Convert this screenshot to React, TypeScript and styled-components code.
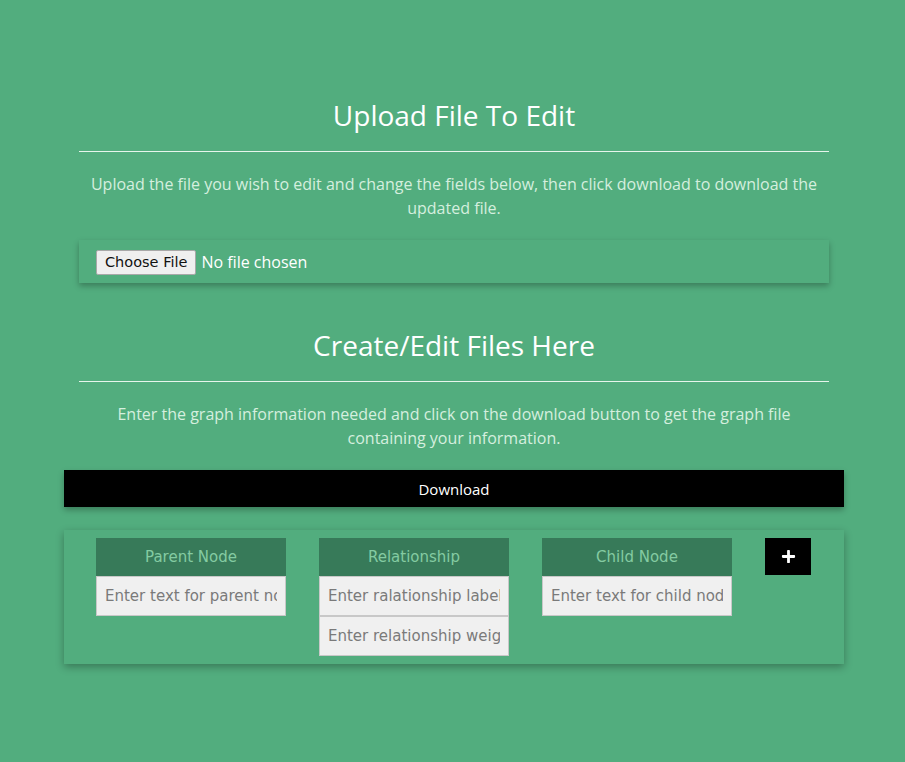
import React from "react";
import styled, { createGlobalStyle } from "styled-components";
import { FaPlus } from "react-icons/fa";

const Global = createGlobalStyle`
  html, body { margin: 0; padding: 0; }
  body {
    background: #52ad7e;
    font-family: "Open Sans", "Noto Sans", sans-serif;
    min-height: 762px;
    padding-left: 3px;
  }
  * { box-sizing: border-box; }
`;

const Page = styled.main`
  width: 780px;
  margin: 0 auto;
  padding-top: 93px;
`;

const Section = styled.section`
  padding: 0 15px;
  display: flex;
  flex-direction: column;
  align-items: stretch;
`;

const Title = styled.h2`
  margin: 0;
  font-weight: 400;
  font-size: 28px;
  line-height: 44px;
  color: #ffffff;
  text-align: center;
`;

const Rule = styled.hr`
  width: 100%;
  margin: 14px 0 0;
  border: 0;
  border-top: 1px solid #e6f5ec;
`;

const Lead = styled.p`
  margin: 20px 0 20px;
  font-size: 16px;
  line-height: 24px;
  color: #d5efdf;
  text-align: center;
`;

const UploadCard = styled.div`
  height: 43px;
  padding: 1px 17px 0;
  display: flex;
  align-items: center;
  box-shadow: 0 3px 6px rgba(0, 0, 0, 0.28);
`;

const FileInput = styled.input`
  font-family: "Open Sans", sans-serif;
  font-size: 16px;
  color: #ffffff;
  &::file-selector-button {
    font-family: "DejaVu Sans", sans-serif;
    font-size: 14.5px;
    height: 25px;
    padding: 0 8px;
    margin-right: 5px;
    background: #efefef;
    border: 1px solid #a8a8a8;
    border-radius: 2px;
    color: #111;
  }
`;

const SecondSection = styled(Section)`
  margin-top: 40px;
`;

const Wide = styled.div`
  margin: 0 -15px;
`;

const DownloadButton = styled.button`
  display: block;
  width: 100%;
  height: 37px;
  border: 0;
  background: #000;
  color: #fff;
  font-family: "Open Sans", sans-serif;
  font-size: 15px;
  box-shadow: 0 3px 6px rgba(0, 0, 0, 0.28);
  cursor: pointer;
`;

const TableCard = styled.div`
  margin-top: 23px;
  padding: 8px 32px;
  display: flex;
  align-items: flex-start;
  gap: 33px;
  box-shadow: 0 3px 8px rgba(0, 0, 0, 0.3);
`;

const Column = styled.div`
  width: 190px;
  display: flex;
  flex-direction: column;
`;

const Head = styled.div`
  height: 38px;
  background: #377a59;
  color: #84cba2;
  font-family: "DejaVu Sans", Verdana, sans-serif;
  font-size: 15px;
  display: flex;
  align-items: center;
  justify-content: center;
`;

const Field = styled.input`
  width: 100%;
  height: 40px;
  padding: 0 8px;
  background: #f0f0f0;
  border: 1px solid #c8c8c8;
  font-family: "DejaVu Sans", Verdana, sans-serif;
  font-size: 15px;
  color: #333;
  outline: none;
  &::placeholder { color: #7a7a7a; }
`;

const AddButton = styled.button`
  width: 46px;
  height: 37px;
  border: 0;
  background: #000;
  color: #fff;
  display: flex;
  align-items: center;
  justify-content: center;
  cursor: pointer;
`;

export default function App() {
  return (
    <>
      <Global />
      <Page>
        <Section>
          <Title>Upload File To Edit</Title>
          <Rule />
          <Lead>
            Upload the file you wish to edit and change the fields below, then click download to download the updated file.
          </Lead>
          <UploadCard>
            <FileInput type="file" />
          </UploadCard>
        </Section>
        <SecondSection>
          <Title>Create/Edit Files Here</Title>
          <Rule />
          <Lead>
            Enter the graph information needed and click on the download button to get the graph file containing your information.
          </Lead>
          <Wide>
            <DownloadButton>Download</DownloadButton>
            <TableCard>
              <Column>
                <Head>Parent Node</Head>
                <Field placeholder="Enter text for parent node" />
              </Column>
              <Column>
                <Head>Relationship</Head>
                <Field placeholder="Enter ralationship label" />
                <Field placeholder="Enter relationship weight" />
              </Column>
              <Column>
                <Head>Child Node</Head>
                <Field placeholder="Enter text for child node" />
              </Column>
              <AddButton aria-label="Add row">
                <FaPlus size={15} />
              </AddButton>
            </TableCard>
          </Wide>
        </SecondSection>
      </Page>
    </>
  );
}
